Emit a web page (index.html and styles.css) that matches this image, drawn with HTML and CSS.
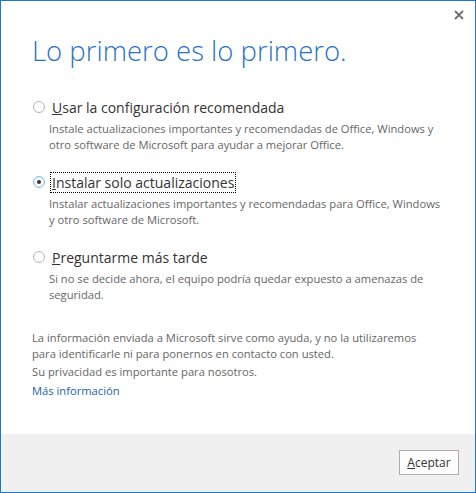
FILE: index.html
```html
<!DOCTYPE html>
<html>
<head>
	<meta charset="utf-8">
	<title>Lo primero es lo primero.</title>
	<link rel="stylesheet" href="styles.css">
</head>
<body>
	<div class="window">
		<div class="content">
			<svg class="close" width="10" height="10" viewBox="0 0 10 10"><path d="M1 1 L9 9 M9 1 L1 9" stroke="#707070" stroke-width="1.8" fill="none"/></svg>
			<h1 class="title">Lo primero es lo primero.</h1>

			<div class="option first">
				<div class="row"><span class="radio"></span><span class="label"><u>U</u>sar la configuración recomendada</span></div>
				<p class="desc">Instale actualizaciones importantes y recomendadas de Office, Windows y<br>otro software de Microsoft para ayudar a mejorar Office.</p>
			</div>

			<div class="option">
				<div class="row"><span class="radio checked"></span><span class="label focus"><u>I</u>nstalar solo actualizaciones</span></div>
				<p class="desc">Instalar actualizaciones importantes y recomendadas para Office, Windows<br>y otro software de Microsoft.</p>
			</div>

			<div class="option">
				<div class="row"><span class="radio"></span><span class="label"><u>P</u>reguntarme más tarde</span></div>
				<p class="desc">Si no se decide ahora, el equipo podría quedar expuesto a amenazas de<br>seguridad.</p>
			</div>

			<div class="privacy">
				<p>La información enviada a Microsoft sirve como ayuda, y no la utilizaremos<br>para identificarle ni para ponernos en contacto con usted.</p>
				<p class="small-gap">Su privacidad es importante para nosotros.</p>
				<a class="more" href="#">Más información</a>
			</div>
		</div>
		<div class="footer">
			<button class="btn"><u>A</u>ceptar</button>
		</div>
	</div>
</body>
</html>
```

FILE: styles.css
```css
html, body
{
	margin: 0;
	padding: 0;
	background: #fff;
}

body
{
	font-family: "Open Sans", "Noto Sans", sans-serif;
	color: #444;
}

.window
{
	width: 474px;
	height: 491px;
	border: 1px solid #1979ca;
	display: flex;
	flex-direction: column;
	background: #fff;
}

.content
{
	flex: 1;
	position: relative;
	padding: 0 8px 0 31px;
}

/* close glyph sits over the top-right corner */
.close
{
	position: absolute;
	top: 9px;
	right: 11px;
}

.title
{
	margin: 30px 0 0 0;
	font-weight: 300;
	font-size: 27.5px;
	line-height: 40px;
	color: #2a72c4;
}

.option
{
	margin-top: 17px;
	padding-left: 1px;
}

.option.first
{
	margin-top: 24px;
}

.row
{
	display: flex;
	align-items: center;
	height: 24px;
}

.radio
{
	width: 10px;
	height: 10px;
	border: 1px solid #b4b4b4;
	border-radius: 50%;
	margin-right: 5px;
	background: #fff;
	position: relative;
}

.radio.checked
{
	border-color: #86bce8;
	box-shadow: 0 0 0 1px #d8e9f8 inset;
}

.radio.checked::after
{
	content: "";
	position: absolute;
	left: 3px;
	top: 3px;
	width: 4px;
	height: 4px;
	border-radius: 50%;
	background: #333;
}

.label
{
	font-size: 14px;
	color: #333;
	padding: 0 1px;
	border: 1px dotted transparent;
}

.label.focus
{
	border-color: #000;
}

.desc
{
	margin: 2px 0 0 16px;
	font-size: 11.2px;
	line-height: 16px;
	color: #666;
	white-space: nowrap;
}

.privacy
{
	margin-top: 27px;
	font-size: 11.2px;
	line-height: 16px;
	color: #666;
	white-space: nowrap;
}

.privacy p
{
	margin: 0;
}

.privacy .small-gap
{
	margin-top: 2px;
}

.more
{
	display: inline-block;
	margin-top: 3px;
	color: #1f5fa8;
	text-decoration: none;
}

.footer
{
	height: 58px;
	background: #f0f0f0;
	display: flex;
	justify-content: flex-end;
	align-items: flex-start;
	padding-right: 16px;
}

.btn
{
	margin-top: 16px;
	width: 60px;
	height: 25px;
	border: 1px solid #adadad;
	background: #fdfdfd;
	font-family: inherit;
	font-size: 12px;
	color: #333;
	padding: 0;
}
```
